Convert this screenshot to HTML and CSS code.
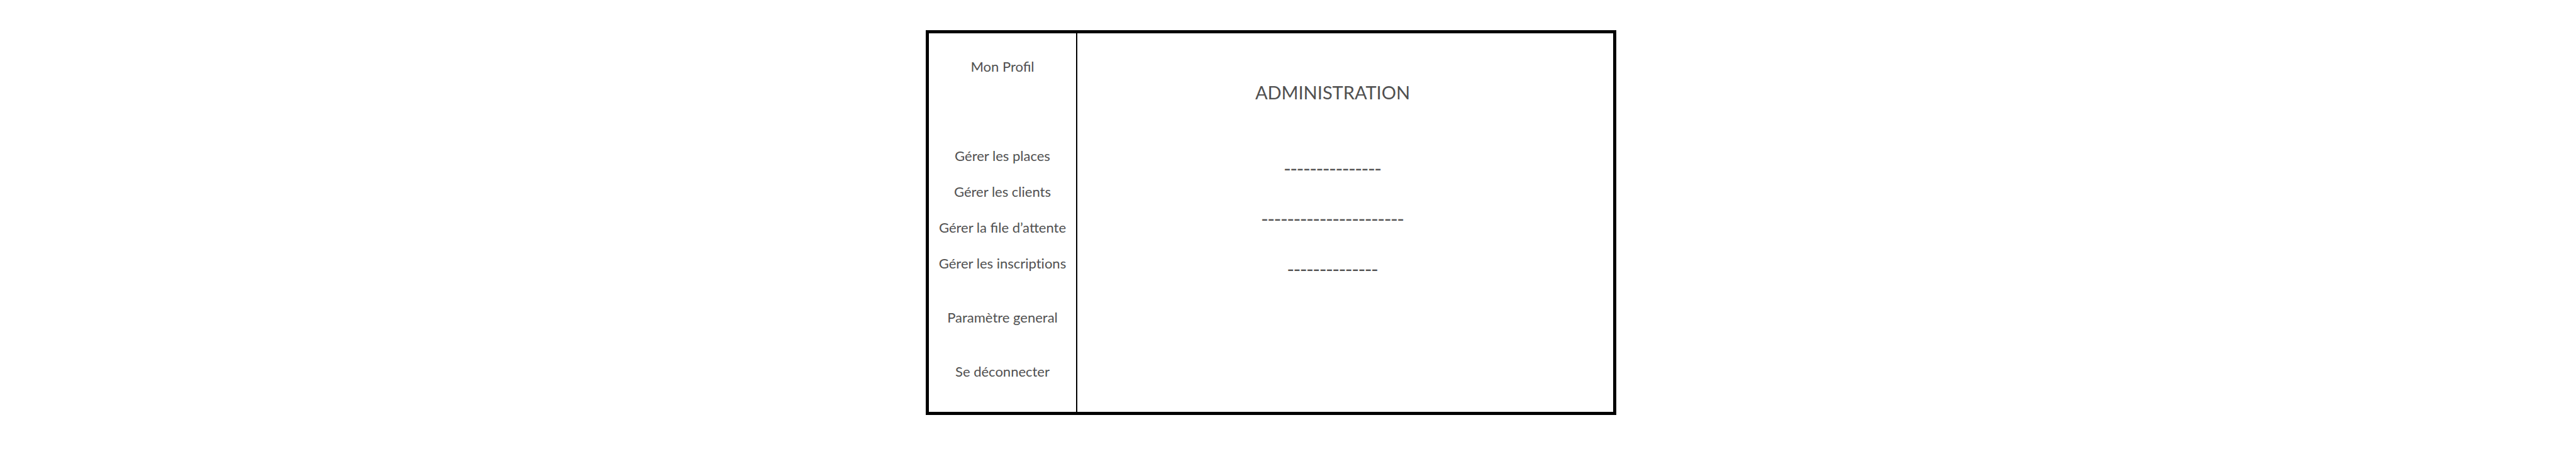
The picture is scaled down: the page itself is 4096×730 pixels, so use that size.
FILE: index.html
```html
<!DOCTYPE html>
<html lang="fr">
<head>
<meta charset="utf-8">
<title>Administration</title>
<link rel="stylesheet" href="styles.css">
</head>
<body>
<div class="page">
  <div class="window">
    <nav class="sidebar" aria-label="Menu">
      <a class="link profile" href="#profil">Mon Profil</a>
      <div class="group">
        <a class="link" href="#places">Gérer les places</a>
        <a class="link" href="#clients">Gérer les clients</a>
        <a class="link" href="#file">Gérer la file d’attente</a>
        <a class="link no-ligature" href="#inscriptions">Gérer les inscriptions</a>
      </div>
      <a class="link" href="#parametre">Paramètre general</a>
      <a class="link" href="#deconnexion">Se déconnecter</a>
    </nav>
    <main class="content">
      <h1 class="title">ADMINISTRATION</h1>
      <p class="line">---------------</p>
      <p class="line">----------------------</p>
      <p class="line">--------------</p>
    </main>
  </div>
</div>
</body>
</html>
```

FILE: styles.css
```css
* {
  box-sizing: border-box;
}

body {
  margin: 0;
  background: #fff;
  color: #505050;
  font-family: Lato, "Open Sans", sans-serif;
}

.page {
  display: grid;
  grid-template-columns: 1472fr 1098fr 1526fr;
  padding: 48px 0;
}

.window {
  grid-column: 2;
  display: grid;
  grid-template-columns: 236px 1fr;
  border: 5px solid #000;
}

.sidebar {
  display: flex;
  flex-direction: column;
  align-items: center;
  gap: 57px;
  padding: 38px 0 50px;
  border-right: 2px solid #000;
}

.group {
  display: flex;
  flex-direction: column;
  align-items: center;
  gap: 28px;
}

.link {
  color: inherit;
  font-size: 22px;
  line-height: 29px;
  text-decoration: none;
  white-space: nowrap;
}

.no-ligature {
  font-variant-ligatures: none;
}

.profile {
  margin-bottom: 56px;
}

.content {
  display: flex;
  flex-direction: column;
  align-items: center;
  gap: 40px;
  padding: 74px 40px 0 0;
}

.title {
  margin: 0 0 40px;
  font-size: 29px;
  font-weight: 400;
  line-height: 40px;
}

.line {
  margin: 0;
  font-family: "Open Sans", sans-serif;
  font-size: 32px;
  line-height: 40px;
}
```
